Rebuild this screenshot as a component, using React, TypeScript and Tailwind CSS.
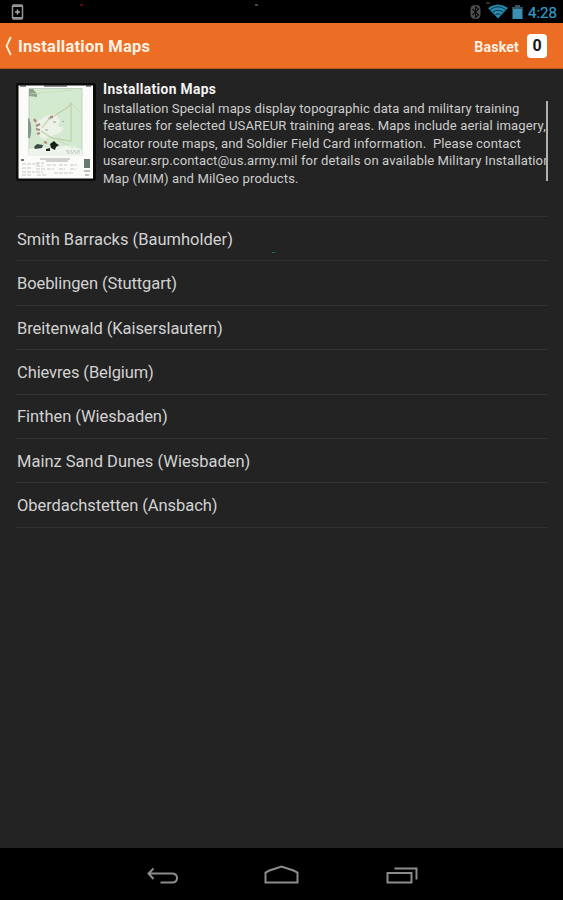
import React from "react";

const description = [
  { text: "Installation Special maps display topographic data and military training", style: "tracking-[0.075px]" },
  { text: "features for selected USAREUR training areas. Maps include aerial imagery,", style: "tracking-[0.11px]" },
  { text: "locator route maps, and Soldier Field Card information.\u00a0 Please contact", style: "tracking-[0.105px]" },
  { text: "usareur.srp.contact@us.army.mil for details on available Military Installation", style: "tracking-[0.09px]" },
  { text: "Map (MIM) and MilGeo products.", style: "tracking-[0.11px]" },
];

const places = [
  { name: "Smith Barracks (Baumholder)", style: "tracking-normal" },
  { name: "Boeblingen (Stuttgart)", style: "tracking-[-0.1px]" },
  { name: "Breitenwald (Kaiserslautern)", style: "tracking-[-0.07px]" },
  { name: "Chievres (Belgium)", style: "tracking-[-0.1px]" },
  { name: "Finthen (Wiesbaden)", style: "tracking-[-0.05px]" },
  { name: "Mainz Sand Dunes (Wiesbaden)", style: "tracking-normal" },
  { name: "Oberdachstetten (Ansbach)", style: "tracking-[-0.06px]" },
];

function StatusBar() {
  return (
    <div className="flex h-[23px] shrink-0 bg-black">
      <svg width="563" height="23" viewBox="0 0 563 23" fill="none">
        <rect x="12.5" y="5" width="10" height="14" rx="1" stroke="#949494" strokeWidth="1.5" />
        <path d="M12.5 6h10M12.5 18h10" stroke="#949494" strokeWidth="2" />
        <path d="M17.5 9.500v5M15 12h5" stroke="#aaa" strokeWidth="1.6" />
        <path d="M80 5h3" stroke="#8f1710" strokeWidth="1.2" />
        <path d="M255 5h3" stroke="#777" strokeWidth="1.2" />
        <path d="M486 3h4" stroke="#52606a" />
        <rect x="470.5" y="5" width="10" height="14" rx="4.5" fill="#505050" />
        <path d="M472.5 9l6 6-3 2.5V6.5l3 2.5-6 6" stroke="#0c0c0c" strokeWidth="1.2" />
        <path d="M488 8Q498 1 508 8L498 18.500z" fill="#258db3" />
        <path d="M490.500 9.500Q498 4 505.500 9.500M493 12Q498 8.500 503 12M495.500 14.500Q498 13 500.500 14.500" stroke="#082c3b" strokeWidth="1" />
        <path d="M512.500 7h2.500V5h5v2h2.500v12h-10z" fill="#3a8fb4" />
        <path d="M512.500 7h2.500V5h5v2h2.500v2h-10z" fill="#365462" />
        <text x="528" y="17.600" fontSize="14.200" fill="#2f9cc6" stroke="#2f9cc6" strokeWidth=".2" textLength="29" lengthAdjust="spacingAndGlyphs">4:28</text>
      </svg>
    </div>
  );
}

function Header() {
  return (
    <header className="flex h-[46px] shrink-0 items-center border-b border-[#b95318] bg-[#eb6e24] pr-4 pl-[5px] font-bold text-[#fff1e4]">
      <svg className="mt-px" width="8" height="20" viewBox="0 0 8 20" fill="none">
        <path d="M5.800 1L1.500 10l4.300 9" stroke="#fff0e0" strokeWidth="1.800" />
      </svg>
      <h1 className="mt-[3px] ml-[5px] text-[16.500px] leading-5 tracking-[0.24px]">Installation Maps</h1>
      <span className="mt-[3px] ml-auto text-[14.200px] leading-5 tracking-[0.15px]">Basket</span>
      <span className="mt-px ml-2 flex h-6 w-5 items-center justify-center rounded bg-white text-base leading-none text-[#181818]">0</span>
    </header>
  );
}

function MapThumbnail() {
  return (
    <svg className="mt-[14px] ml-4 shrink-0" width="80" height="98" viewBox="16 83 80 98" fill="none">
      <rect x="16" y="83" width="80" height="98" rx="2" fill="#0b0b0b" />
      <path d="M18.500 85.500H93v93H18.500z" fill="#fbfbf9" />
      <path d="M20 86h6m18 0h23m19 0h5" stroke="#222" strokeWidth="1" />
      <path d="M29 88.500h53v67H29z" fill="#d3ead0" stroke="#b4c2b1" strokeWidth=".7" />
      <path d="M29 149l10-2 15 1 16-3 12 5v6H29z" fill="#eef3ec" />
      <path d="M29 89h4l4 5v3l-8-1z" fill="#8da38d" />
      <path d="M29 118q4 10 1 20h-2v-19z" fill="#839a8d" />
      <path d="M37 122l9-6 9-2 5 6-2 6 6 2-4 5-9 3-7 3-5-3z" fill="#edf2e8" />
      <path d="M42 128l6-8 20-13 3-4v38l-19-3-11-7" stroke="#c2cca0" strokeWidth="1.100" />
      <path d="M72 104l9 9M30 94l43-4M56 139l18 9" stroke="#c2dab9" strokeWidth=".7" />
      <path d="M34 119l2 3m0 4 4-2m-4 5 4 1m-3 4 3-1m10-16h3m-9 25 3 1" stroke="#a98982" strokeWidth="2.300" />
      <path d="M48 118h3m2 4h3m6-1 2 1m-19 8h3" stroke="#9da296" strokeWidth="1" />
      <path d="M34 147l3-3 6 1-1 3-7 1z" fill="#3c4c42" />
      <path d="M50 144l4-3 3 3 2 1-3 2-1 3-4-2zm-4 5 4-1v3h-4z" fill="#162019" />
      <path d="M66 151h6m1 0h8M67 153h13" stroke="#b7c1b6" strokeDasharray="3 1" />
      <path d="M40 159h30M46 161h22" stroke="#9c9c9c" strokeWidth=".9" />
      <path d="M21 159h3v2h-3M84 159h6v9h-6z" fill="#687a70" />
      <path d="M84 171h6M85 175h4" stroke="#a8b0ab" strokeWidth="1.500" />
      <path d="M22 164h17m-17 4h10m4-5h8m-8 3h7m-7 3h9m-9 3h7m4-7h9m-9 4h7m5-4h8m-8 4h6m5-4h7m-7 4h6m-22 4h20M22 172h13m-13 3h9m6 0h10" stroke="#bbb" strokeWidth=".8" strokeDasharray="4 1" />
    </svg>
  );
}

function NavigationBar() {
  return (
    <nav className="mt-auto flex h-[52px] shrink-0 bg-black">
      <svg width="563" height="52" viewBox="0 0 563 52" fill="none" stroke="#8c8c8c" strokeWidth="2">
        <path d="M153.500 20.500l-5 5 5 5.500M149 25.500h23q5 0 5 4.500t-5 4.500h-11.500" />
        <path d="M265.500 34.500v-10l4-2 12-4 12 4 4 2v10z" />
        <path d="M387.500 25h24v9.500h-24zM394.500 20.500h22v11" />
      </svg>
    </nav>
  );
}

export default function App() {
  return (
    <div className="relative flex h-[900px] w-[563px] flex-col overflow-hidden bg-[#232323] font-['Roboto',sans-serif]">
      <StatusBar />
      <Header />
      <section className="flex h-[147px] shrink-0">
        <MapThumbnail />
        <div className="mt-[11px] ml-[7px] w-[443px] overflow-hidden whitespace-nowrap text-[#cdcdcd]">
          <h2 className="text-[13.800px] leading-[19px] font-bold tracking-[0.36px] text-[#f4f4f4]">Installation Maps</h2>
          {description.map((line) => (
            <p key={line.text} className={`relative top-[0.600px] text-[13.100px] leading-[17.600px] ${line.style}`}>{line.text}</p>
          ))}
        </div>
        <div className="mt-8 h-20 w-[2px] bg-[#b0b0b0]" />
      </section>
      <ul className="mr-[15px] ml-4 border-t border-[#303333]">
        {places.map((place) => (
          <li key={place.name} className={`flex h-[44.400px] items-center border-b border-[#303333] pt-[3px] pl-px text-[16.500px] text-[#d2d2d2] ${place.style}`}>
            {place.name}
          </li>
        ))}
      </ul>
      <span className="absolute top-[252px] left-[272px] h-px w-[3px] bg-[#16745f]" />
      <NavigationBar />
    </div>
  );
}
